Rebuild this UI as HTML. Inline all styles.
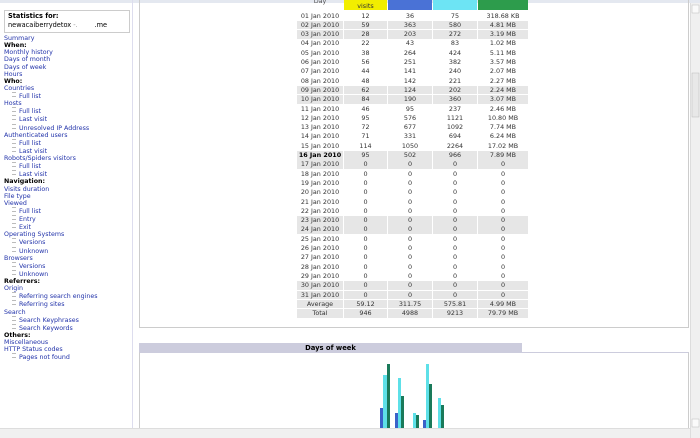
<!DOCTYPE html>
<html><head><meta charset="utf-8"><style>
*{margin:0;padding:0;box-sizing:border-box}
body{width:700px;height:438px;overflow:hidden;background:#fff;position:relative;font-family:"DejaVu Sans","Liberation Sans",sans-serif;font-size:6.4px;color:#000}
.a{position:absolute}
#left{left:0;top:0;width:133px;height:438px;border-right:1px solid #dde;}
#nav{left:4px;top:35px;line-height:7.12px;font-size:6.3px;white-space:nowrap}
#nav div{color:#2233aa}
#nav b{display:block;color:#000;font-weight:bold}
#nav .s{padding-left:8px}
#nav .s:before{content:"";display:inline-block;width:4px;height:3px;border-top:1px solid #bbb;border-bottom:1px solid #bbb;margin-right:3px;vertical-align:1px}
.row{position:absolute;left:297px;height:8.6px;width:231px;line-height:8.6px;color:#333}
.row span{position:absolute;top:0;height:8.6px;text-align:center}
.g span{background:#e6e6e6}
.c0{left:0;width:46px}.c1{left:47px;width:43px}.c2{left:91px;width:44px}.c3{left:136px;width:44px}.c4{left:181px;width:50px}
</style></head><body>
<div class="a" style="left:0;top:0;width:700px;height:3px;background:#e4e8f0"></div>
<div class="a" id="left"></div>
<div class="a" style="left:4px;top:10px;width:126px;height:23px;border:1px solid #ccc;padding:1px 3px;line-height:9px;font-size:6.6px"><b>Statistics for:</b><br>newacaiberrydetox <span style="color:#999">-.</span>&nbsp;&nbsp;&nbsp;&nbsp;&nbsp;&nbsp;&nbsp;&nbsp;.me</div>
<div class="a" id="nav">
<div>Summary</div><b>When:</b><div>Monthly history</div><div>Days of month</div><div>Days of week</div><div>Hours</div><b>Who:</b><div>Countries</div><div class="s">Full list</div><div>Hosts</div><div class="s">Full list</div><div class="s">Last visit</div><div class="s">Unresolved IP Address</div><div>Authenticated users</div><div class="s">Full list</div><div class="s">Last visit</div><div>Robots/Spiders visitors</div><div class="s">Full list</div><div class="s">Last visit</div><b>Navigation:</b><div>Visits duration</div><div>File type</div><div>Viewed</div><div class="s">Full list</div><div class="s">Entry</div><div class="s">Exit</div><div>Operating Systems</div><div class="s">Versions</div><div class="s">Unknown</div><div>Browsers</div><div class="s">Versions</div><div class="s">Unknown</div><b>Referrers:</b><div>Origin</div><div class="s">Referring search engines</div><div class="s">Referring sites</div><div>Search</div><div class="s">Search Keyphrases</div><div class="s">Search Keywords</div><b>Others:</b><div>Miscellaneous</div><div>HTTP Status codes</div><div class="s">Pages not found</div>
</div>
<div class="a" style="left:139px;top:-2px;width:550px;height:330px;border:1px solid #ccc;border-top:none"></div>
<div class="row" style="top:0px;height:10px"><span class="c0" style="top:-3px;color:#555">Day</span><span class="c1" style="background:#f2ee00;height:10px;top:0;line-height:12px">visits</span><span class="c2" style="background:#4a72d6;height:10px"></span><span class="c3" style="background:#6de4f4;height:10px"></span><span class="c4" style="background:#2d9c4c;height:10px"></span></div>
<div id="rows"></div>
<div class="a" style="left:139px;top:343px;width:383px;height:10px;background:#ccccdd;text-align:center;font-weight:bold;font-size:6.8px;line-height:10px;color:#000">Days of week</div>
<div class="a" style="left:139px;top:352px;width:550px;height:80px;border:1px solid #ccc;border-bottom:none;border-top:1px solid #ccd"></div>
<svg class="a" style="left:0;top:0" width="700" height="438">
<g>
<rect x="380" y="408" width="3" height="30" fill="#3a62c8"/><rect x="383" y="375" width="4" height="63" fill="#5ee0e8"/><rect x="387" y="364" width="3" height="74" fill="#1a7a5a"/>
<rect x="395" y="413" width="3" height="25" fill="#3a62c8"/><rect x="398" y="378" width="3" height="60" fill="#5ee0e8"/><rect x="401" y="396" width="3" height="42" fill="#1a7a5a"/>
<rect x="413" y="413" width="3" height="25" fill="#5ee0e8"/><rect x="416" y="415" width="3" height="23" fill="#1a7a5a"/>
<rect x="423" y="420" width="3" height="18" fill="#3a62c8"/><rect x="426" y="364" width="3" height="74" fill="#5ee0e8"/><rect x="429" y="384" width="3" height="54" fill="#1a7a5a"/>
<rect x="435" y="430" width="3" height="8" fill="#3a62c8"/><rect x="438" y="398" width="3" height="40" fill="#5ee0e8"/><rect x="441" y="405" width="3" height="33" fill="#1a7a5a"/>
<rect x="453" y="432" width="3" height="6" fill="#5ee0e8"/><rect x="456" y="429" width="3" height="9" fill="#1a7a5a"/>
</g>
<rect x="0" y="428" width="690" height="10" fill="#f0f0f0"/><line x1="0" y1="428.5" x2="690" y2="428.5" stroke="#ddd"/>
<rect x="690" y="3" width="10" height="435" fill="#f0f0f0"/><line x1="690.5" y1="3" x2="690.5" y2="438" stroke="#ddd"/>
<rect x="692" y="5" width="7" height="8" fill="#fafafa" stroke="#bbb" stroke-width=".5"/>
<rect x="692" y="73" width="7" height="44" fill="#e8e8e8" stroke="#bbb" stroke-width=".5"/>
<rect x="692" y="419" width="7" height="8" fill="#fafafa" stroke="#bbb" stroke-width=".5"/>
</svg>
<script>
var d=[["12","36","75","318.68 KB"],["59","363","580","4.81 MB"],["28","203","272","3.19 MB"],["22","43","83","1.02 MB"],["38","264","424","5.11 MB"],["56","251","382","3.57 MB"],["44","141","240","2.07 MB"],["48","142","221","2.27 MB"],["62","124","202","2.24 MB"],["84","190","360","3.07 MB"],["46","95","237","2.46 MB"],["95","576","1121","10.80 MB"],["72","677","1092","7.74 MB"],["71","331","694","6.24 MB"],["114","1050","2264","17.02 MB"],["95","502","966","7.89 MB"]];
var g={2:1,3:1,9:1,10:1,16:1,17:1,23:1,24:1,30:1,31:1};var h="";
function row(i,day,v,gr,b){return '<div class="row'+(gr?' g':'')+'" style="top:'+(11.5+9.3*i).toFixed(1)+'px"><span class="c0"'+(b?' style="font-weight:bold;color:#000"':'')+'>'+day+'</span><span class="c1">'+v[0]+'</span><span class="c2">'+v[1]+'</span><span class="c3">'+v[2]+'</span><span class="c4">'+v[3]+'</span></div>';}
for(var i=1;i<=31;i++){var v=d[i-1]||["0","0","0","0"];h+=row(i-1,(i<10?"0":"")+i+" Jan 2010",v,g[i],i==16);}
h+=row(31,"Average",["59.12","311.75","575.81","4.99 MB"],1);h+=row(32,"Total",["946","4988","9213","79.79 MB"],1);
document.getElementById("rows").innerHTML=h;
</script>
</body></html>
